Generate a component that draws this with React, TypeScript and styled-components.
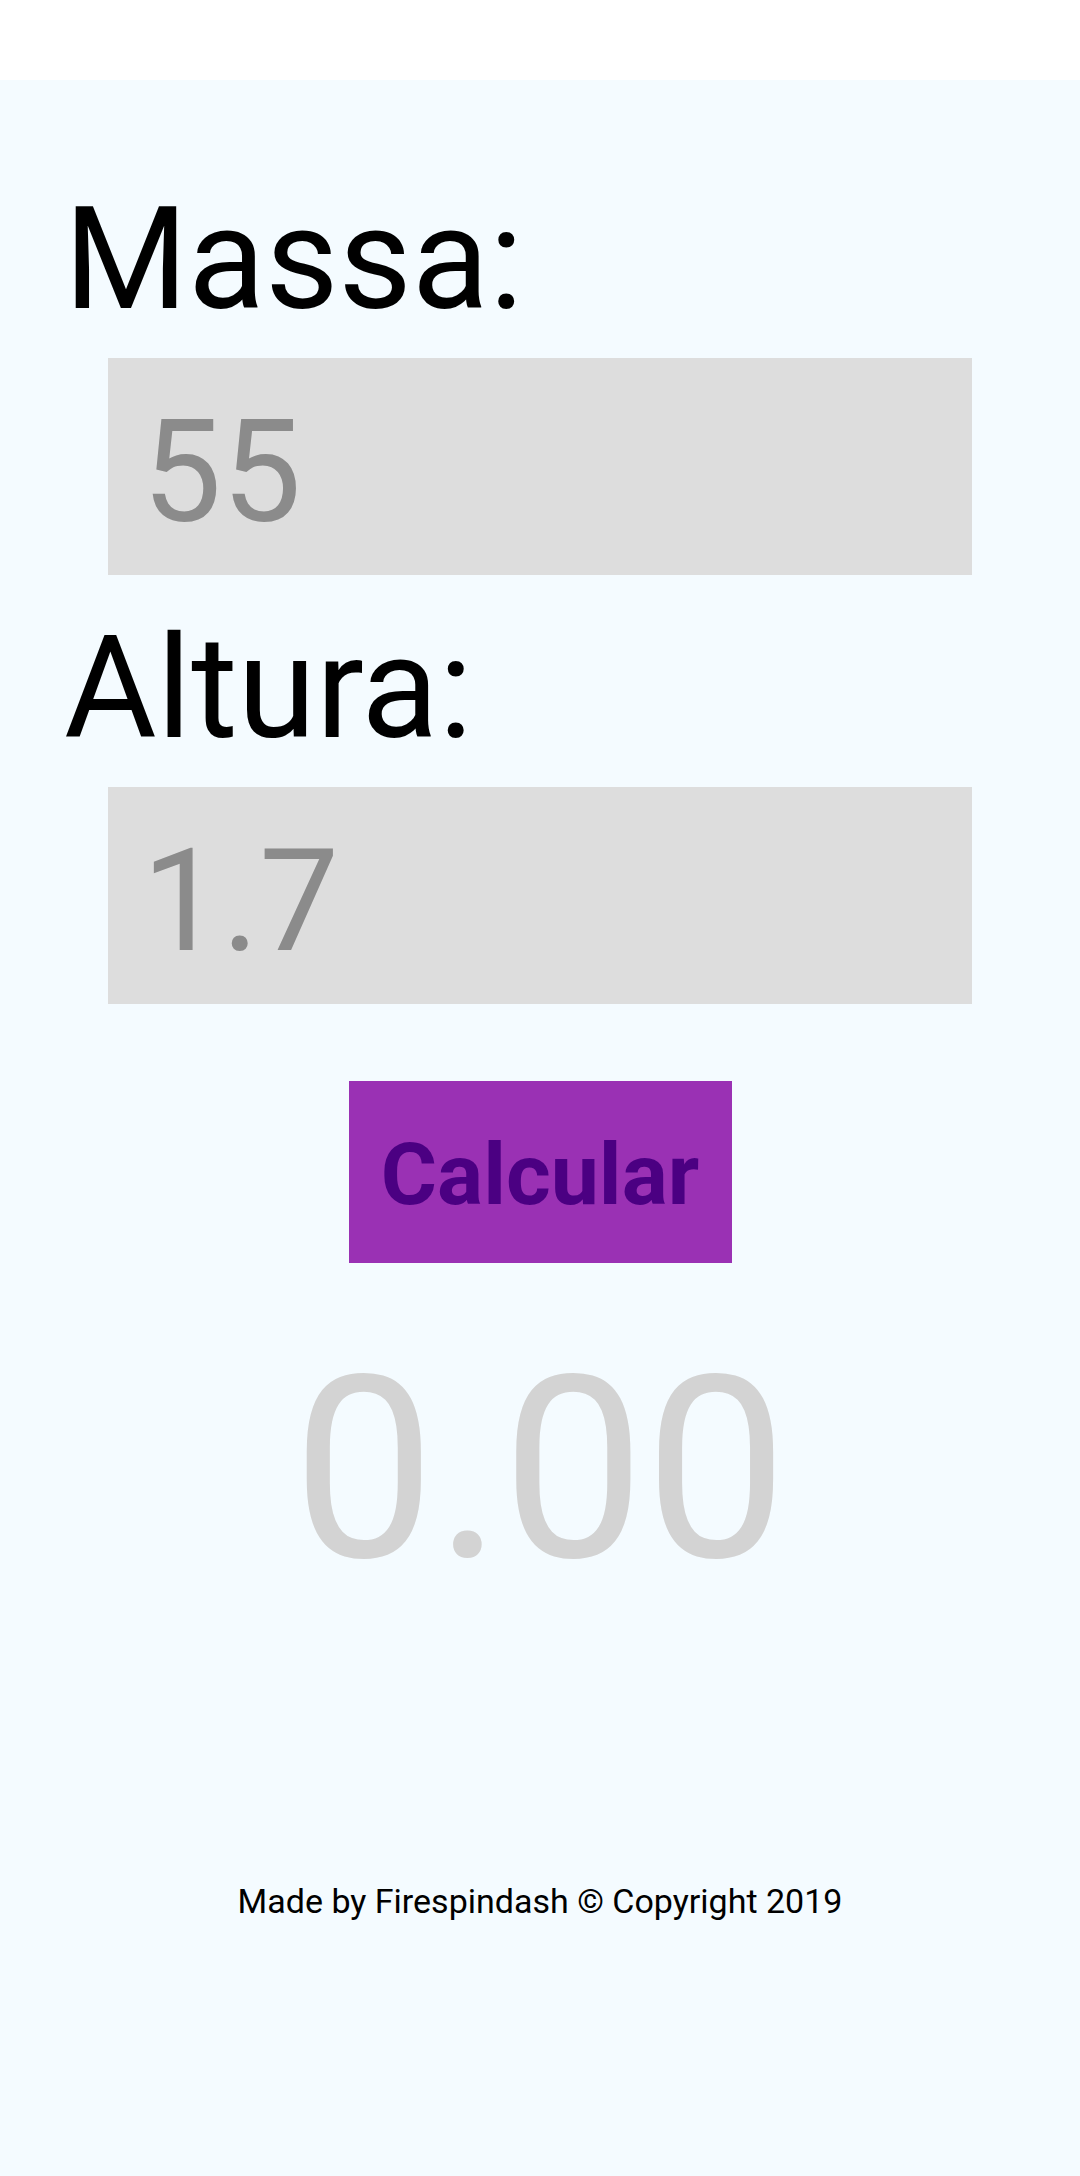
import React from "react";
import styled, { createGlobalStyle } from "styled-components";

const GlobalStyle = createGlobalStyle`
  html, body {
    margin: 0;
    padding: 0;
    background: #f4fbff;
  }
  body {
    font-family: Roboto, "Liberation Sans", Arial, sans-serif;
  }
  * { box-sizing: border-box; }
`;

const Page = styled.div`
  min-height: 2176px;
  display: flex;
  flex-direction: column;
  background: #f4fbff;
`;

const Header = styled.header`
  height: 80px;
  background: #ffffff;
`;

const Main = styled.main`
  display: flex;
  flex-direction: column;
  padding: 109px 0 0;
`;

const Field = styled.div<{ $gap?: number }>`
  display: flex;
  flex-direction: column;
  margin-top: ${(p) => p.$gap ?? 0}px;
`;

const Label = styled.label`
  font-family: Roboto, "Liberation Sans", Arial, sans-serif;
  font-size: 142px;
  line-height: 1;
  color: #000000;
  padding-left: 64px;
`;

const Input = styled.input`
  align-self: center;
  width: 864px;
  height: 217px;
  margin-top: 27px;
  border: none;
  outline: none;
  background: #dddddd;
  color: #8b8b8b;
  font-family: Roboto, "Liberation Sans", Arial, sans-serif;
  font-size: 142px;
  padding: 11px 0 0 34px;
`;

const Button = styled.button`
  align-self: center;
  width: 383px;
  height: 182px;
  margin-top: 77px;
  border: none;
  background: #9a31b4;
  color: #4b0082;
  font-family: Roboto, "Liberation Sans", Arial, sans-serif;
  font-weight: 700;
  font-size: 86px;
  padding: 4px 0 0;
  cursor: pointer;
`;

const Result = styled.div`
  margin-top: 58px;
  text-align: center;
  font-family: Roboto, "Liberation Sans", Arial, sans-serif;
  font-size: 254px;
  line-height: normal;
  color: #d3d3d3;
`;

const Footer = styled.footer`
  margin-top: 262px;
  text-align: center;
  font-family: Roboto, "Liberation Sans", Arial, sans-serif;
  font-size: 34px;
  line-height: normal;
  color: #000000;
`;

export default function App() {
  return (
    <>
      <GlobalStyle />
      <Page>
        <Header />
        <Main>
          <Field>
            <Label htmlFor="massa">Massa:</Label>
            <Input id="massa" type="text" defaultValue="55" />
          </Field>
          <Field $gap={43}>
            <Label htmlFor="altura">Altura:</Label>
            <Input id="altura" type="text" defaultValue="1.7" />
          </Field>
          <Button type="button">Calcular</Button>
          <Result>0.00</Result>
          <Footer>Made by Firespindash © Copyright 2019</Footer>
        </Main>
      </Page>
    </>
  );
}
